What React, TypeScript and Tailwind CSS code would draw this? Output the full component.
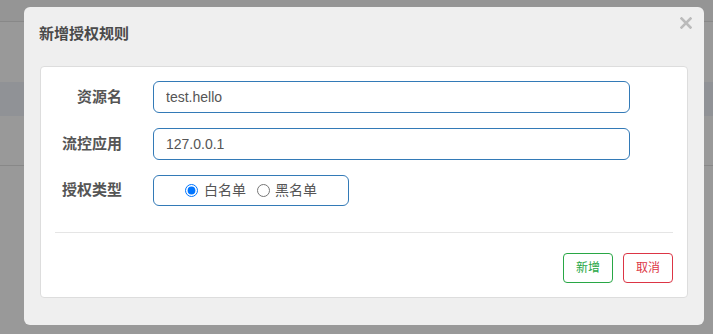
import { useState } from "react";

const FONT = "font-['Liberation_Sans','Noto_Sans_CJK_SC',sans-serif]";

const FormRow = ({ label, children }: { label: string; children: React.ReactNode }) => (
  <div className="flex items-center gap-[31px]">
    <div className="w-[67px] text-right text-[15px] font-bold text-[#555] whitespace-nowrap">{label}</div>
    {children}
  </div>
);

const App = () => {
  const [resource, setResource] = useState("test.hello");
  const [app, setApp] = useState("127.0.0.1");
  const [strategy, setStrategy] = useState("white");

  return (
    <div className={`relative w-[713px] h-[334px] overflow-hidden bg-[#999] ${FONT}`}>
      {/* page behind the overlay */}
      <div className="h-[22px] bg-[#959595] border-b border-[#888]" />
      <div className="h-[60px]" />
      <div className="h-[34px] bg-[#909296]" />
      <div className="h-[50px] border-b border-[#888]" />

      {/* modal */}
      <div className="absolute left-[24px] top-[7px] w-[680px] h-[318px] bg-[#efefef] rounded-[6px] flex flex-col">
        <div className="relative h-[59px] pl-[15px] pt-[18px]">
          <h4 className="text-[15px] leading-[18px] font-bold text-[#4a4a4a]">新增授权规则</h4>
          <button className="absolute right-[12px] top-[10px] w-[12px] h-[12px]">
            <svg viewBox="0 0 12 12" className="w-[12px] h-[12px]">
              <path d="M1.5 1.5 L10.5 10.5 M10.5 1.5 L1.5 10.5" stroke="#bbb" strokeWidth="2.6" strokeLinecap="square" />
            </svg>
          </button>
        </div>

        <div className="mx-[16px] h-[232px] bg-white border border-[#ddd] rounded-[4px] px-[14px] pt-[14px] flex flex-col">
          <div className="flex flex-col gap-[15px]">
            <FormRow label="资源名">
              <input
                type="text"
                value={resource}
                onChange={(e) => setResource(e.target.value)}
                className="w-[477px] h-[32px] px-[12px] border border-[#337ab7] rounded-[6px] text-[14px] text-[#555] outline-none"
              />
            </FormRow>
            <FormRow label="流控应用">
              <input
                type="text"
                value={app}
                onChange={(e) => setApp(e.target.value)}
                className="w-[477px] h-[32px] px-[12px] border border-[#337ab7] rounded-[6px] text-[14px] text-[#555] outline-none"
              />
            </FormRow>
            <FormRow label="授权类型">
              <div className="w-[196px] h-[31px] border border-[#337ab7] rounded-[6px] flex items-center justify-center gap-[11px] text-[14px] text-[#555]">
                <label className="flex items-center gap-[6px]">
                  <input
                    type="radio"
                    name="strategy"
                    checked={strategy === "white"}
                    onChange={() => setStrategy("white")}
                    className="w-[13px] h-[13px] m-0 accent-[#0075ff]"
                  />
                  白名单
                </label>
                <label className="flex items-center gap-[5px]">
                  <input
                    type="radio"
                    name="strategy"
                    checked={strategy === "black"}
                    onChange={() => setStrategy("black")}
                    className="w-[13px] h-[13px] m-0 accent-[#0075ff]"
                  />
                  黑名单
                </label>
              </div>
            </FormRow>
          </div>

          <hr className="mt-[26px] border-t border-[#e5e5e5]" />

          <div className="mt-[20px] flex justify-end gap-[10px]">
            <button className="w-[50px] h-[30px] border border-[#28a745] rounded-[4px] text-[12px] text-[#28a745] bg-white">
              新增
            </button>
            <button className="w-[50px] h-[30px] border border-[#dc3545] rounded-[4px] text-[12px] text-[#dc3545] bg-white">
              取消
            </button>
          </div>
        </div>
      </div>
    </div>
  );
};

export default App;
